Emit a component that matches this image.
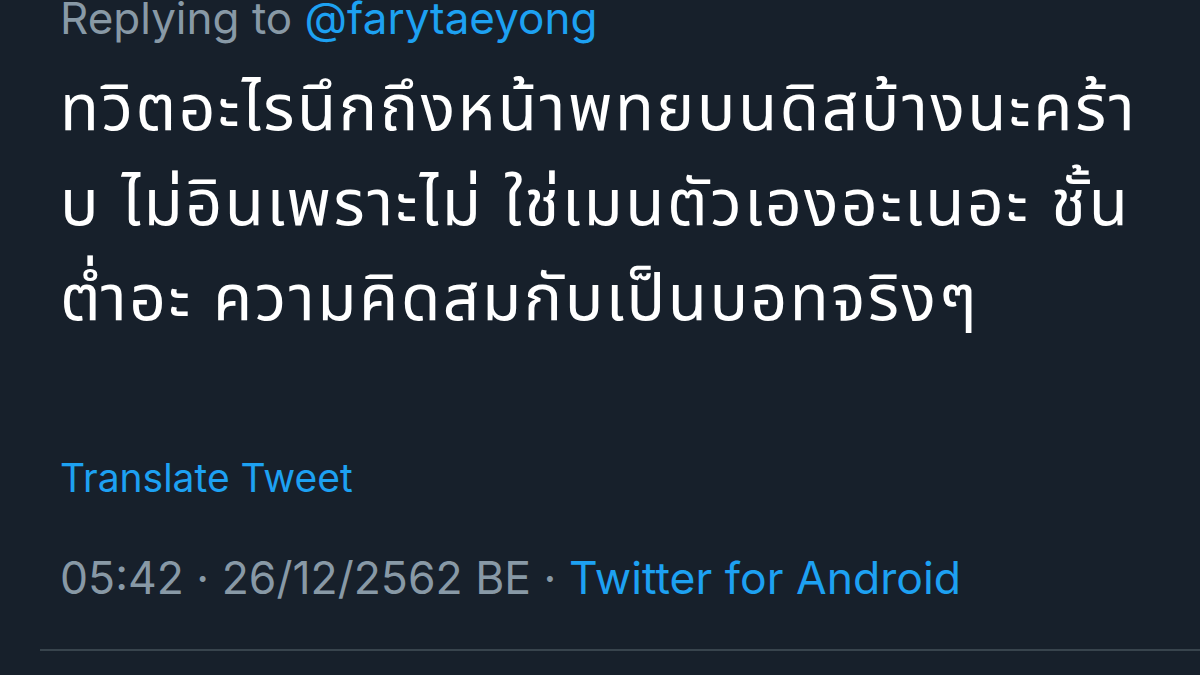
import React from "react";

export default function App() {
  const font = { fontFamily: "Inter, 'Noto Sans Thai', 'Noto Sans', sans-serif" };
  return (
    <div className="w-[1200px] h-[675px] overflow-hidden bg-[#17202b] text-white" style={font}>
      <div className="pl-[60px] -mt-[6px]">
        <div className="text-[44px] leading-[48px] text-[#8899a6]">
          Replying to <span className="text-[#1da1f2]">@farytaeyong</span>
        </div>
        <div className="mt-[17px] text-[64px] leading-[95px] tracking-[2.5px] text-white whitespace-nowrap">
          <div>ทวิตอะไรนึกถึงหน้าพทยบนดิสบ้างนะคร้า</div>
          <div>บ ไม่อินเพราะไม่ ใช่เมนตัวเองอะเนอะ ชั้น</div>
          <div>ต่ำอะ ความคิดสมกับเป็นบอทจริงๆ</div>
        </div>
        <div className="mt-[110px] text-[39px] leading-[48px] text-[#1da1f2]">Translate Tweet</div>
        <div className="mt-[52px] text-[44.5px] leading-[48px] text-[#8899a6]">
          05:42 · 26/12/2562 BE · <span className="text-[#1da1f2]">Twitter for Android</span>
        </div>
      </div>
      <div className="ml-[40px] mt-[47px] h-[2px] bg-[#38444d]" />
    </div>
  );
}
